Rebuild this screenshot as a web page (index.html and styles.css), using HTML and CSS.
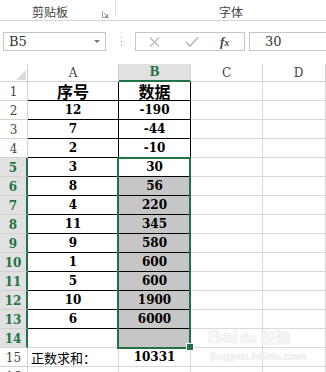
FILE: index.html
```html
<!DOCTYPE html>
<html lang="zh-CN">
<head>
    <meta charset="UTF-8">
    <title>正数求和</title>
    <link rel="stylesheet" href="styles.css">
</head>
<body>
<div id="ribbon">
    <div class="group clip">
        <span class="label">剪贴板</span>
        <svg class="launcher" width="7" height="7" viewBox="0 0 7 7">
            <path d="M0.5 0v6.5H7" fill="none" stroke="#9a9a9a"/>
            <path d="M2 2l3.5 3.5M3 5.5h2.5V3" fill="none" stroke="#9a9a9a"/>
        </svg>
    </div>
    <div class="group font">
        <span class="label">字体</span>
    </div>
</div>

<div id="fbar">
    <div class="namebox">
        <span>B5</span>
        <i class="arrow"></i>
    </div>
    <div class="grip"><i></i><i></i><i></i></div>
    <div class="tools">
        <svg class="cancel" width="11" height="10" viewBox="0 0 11 10">
            <path d="M1 0.5l9 9M10 0.5l-9 9" stroke="#b9b9b9" stroke-width="1.3"/>
        </svg>
        <svg class="enter" width="14" height="10" viewBox="0 0 14 10">
            <path d="M1 5l4 4 8-8.5" fill="none" stroke="#b9b9b9" stroke-width="1.6"/>
        </svg>
        <span class="fx">f<small>x</small></span>
    </div>
    <div class="input">30</div>
</div>

<div id="wrap">
<div id="sheet">
    <div class="c ch corner"><i></i></div><div class="c ch">A</div><div class="c ch on">B</div><div class="c ch">C</div><div class="c ch cut">D</div>

    <div class="c rh">1</div><div class="c k cn">序号</div><div class="c k cn">数据</div><div class="c"></div><div class="c"></div>
    <div class="c rh">2</div><div class="c k">12</div><div class="c k">-190</div><div class="c"></div><div class="c"></div>
    <div class="c rh">3</div><div class="c k">7</div><div class="c k">-44</div><div class="c"></div><div class="c"></div>
    <div class="c rh">4</div><div class="c k">2</div><div class="c k">-10</div><div class="c"></div><div class="c"></div>
    <div class="c rh on">5</div><div class="c k">3</div><div class="c k">30</div><div class="c"></div><div class="c"></div>
    <div class="c rh on">6</div><div class="c k">8</div><div class="c k g">56</div><div class="c"></div><div class="c"></div>
    <div class="c rh on">7</div><div class="c k">4</div><div class="c k g">220</div><div class="c"></div><div class="c"></div>
    <div class="c rh on">8</div><div class="c k">11</div><div class="c k g">345</div><div class="c"></div><div class="c"></div>
    <div class="c rh on">9</div><div class="c k">9</div><div class="c k g">580</div><div class="c"></div><div class="c"></div>
    <div class="c rh on">10</div><div class="c k">1</div><div class="c k g">600</div><div class="c"></div><div class="c"></div>
    <div class="c rh on">11</div><div class="c k">5</div><div class="c k g">600</div><div class="c"></div><div class="c"></div>
    <div class="c rh on">12</div><div class="c k">10</div><div class="c k g">1900</div><div class="c"></div><div class="c"></div>
    <div class="c rh on">13</div><div class="c k">6</div><div class="c k g">6000</div><div class="c"></div><div class="c"></div>
    <div class="c rh on">14</div><div class="c"></div><div class="c g"></div><div class="c"></div><div class="c"></div>
    <div class="c rh">15</div><div class="c sum">正数求和：</div><div class="c">10331</div><div class="c"></div><div class="c"></div>
    <div class="c rh">16</div><div class="c"></div><div class="c"></div><div class="c"></div><div class="c"></div>

    <!-- 选区 -->
    <div class="sel"></div>
    <div class="handle"></div>

    <!-- 水印 -->
    <div class="mark">
        <div class="logo">Bai<span class="du">du</span><span class="jy">经验</span></div>
        <div class="url">jingyan.baidu.com</div>
    </div>
</div>
</div>
</body>
</html>
```

FILE: styles.css
```css
* {
    margin: 0;
    padding: 0;
    box-sizing: border-box;
}

body {
    width: 326px;
    height: 372px;
    overflow: hidden;
    background: #fff;
    color: #000;
    font-family: "DejaVu Serif", serif;
}

/* 功能区 */
#ribbon {
    display: flex;
    align-items: flex-start;
    height: 21px;
    overflow: hidden;
    border-bottom: 1px solid #d5d5d5;
    font-family: "Noto Sans CJK SC", sans-serif;
    font-size: 12px;
    color: #444;
}

.group {
    display: flex;
    align-items: flex-start;
    flex-shrink: 0;
    height: 17px;
    padding-top: 4px;
}

.group .label {
    flex-shrink: 0;
    white-space: nowrap;
    line-height: 16px;
}

.clip {
    width: 116px;
    border-right: 1px solid #e0e0e0;
    padding-left: 32px;
}

.launcher {
    flex-shrink: 0;
    margin: 7px 6px 0 auto;
}

.font {
    width: 210px;
    justify-content: center;
    padding-left: 20px;
}

/* 编辑栏 */
#fbar {
    display: flex;
    align-items: center;
    height: 19px;
    margin: 11px 0 13px;
    font-size: 13px;
    color: #333;
}

.namebox {
    display: flex;
    align-items: center;
    justify-content: space-between;
    width: 103px;
    height: 19px;
    margin-left: 3px;
    padding: 0 5px;
    border: 1px solid #c6c6c6;
}

.arrow {
    width: 0;
    height: 0;
    border-left: 3px solid transparent;
    border-right: 3px solid transparent;
    border-top: 3px solid #777;
}

.grip {
    display: flex;
    flex-direction: column;
    gap: 3px;
    margin-left: 15px;
}

.grip i {
    width: 1px;
    height: 1px;
    background: #9a9a9a;
}

.tools {
    display: flex;
    align-items: center;
    width: 110px;
    height: 19px;
    margin-left: 13px;
    padding-left: 13px;
    border: 1px solid #c6c6c6;
}

.enter {
    margin-left: 25px;
}

.fx {
    margin-left: 21px;
    font-family: "Liberation Serif", serif;
    font-style: italic;
    font-weight: bold;
    font-size: 13px;
    color: #444;
}

.fx small {
    font-size: 10px;
}

.input {
    flex: 1;
    height: 19px;
    margin-left: 4px;
    padding-left: 15px;
    border: 1px solid #c6c6c6;
    border-right: none;
    line-height: 17px;
}

/* 表格 */
#wrap {
    width: 326px;
    height: 308px;
    overflow: hidden;
}

#sheet {
    position: relative;
    display: grid;
    grid-template-columns: 28px 91px 72px 72px 63px;
    grid-template-rows: 18px;
    grid-auto-rows: 19px;
}

.c {
    display: flex;
    align-items: center;
    justify-content: center;
    border-right: 1px solid #d9d9d9;
    border-bottom: 1px solid #d9d9d9;
    font-size: 12px;
    font-weight: bold;
}

.ch {
    border-color: #d0d0d0;
    font-weight: normal;
    color: #444;
}

.ch.cut {
    padding-left: 9px;
}

.ch.on {
    background: #e1e1e1;
    border-bottom: 2px solid #217346;
    color: #217346;
    font-weight: bold;
}

.corner {
    justify-content: flex-end;
    align-items: flex-end;
    padding: 0 1px 1px 0;
}

.corner i {
    width: 0;
    height: 0;
    border-left: 10px solid transparent;
    border-bottom: 10px solid #dcdcdc;
}

.rh {
    border-color: #d0d0d0;
    font-weight: normal;
    color: #444;
    padding-top: 1px;
}

.rh.on {
    background: #e1e1e1;
    border-right: 2px solid #217346;
    color: #217346;
    font-weight: bold;
}

.k {
    border-color: #000;
}

.g {
    background: #c6c6c6;
}

.cn {
    font-family: "Noto Sans CJK SC", sans-serif;
    font-size: 16px;
}

.sum {
    justify-content: flex-start;
    padding-left: 3px;
    font-family: "Noto Sans CJK SC", sans-serif;
    font-size: 13px;
    font-weight: normal;
}

.sel {
    position: absolute;
    left: 117px;
    top: 93px;
    width: 74px;
    height: 192px;
    border: 2px solid #217346;
}

.handle {
    position: absolute;
    left: 186px;
    top: 279px;
    width: 8px;
    height: 8px;
    background: #217346;
    border: 1px solid #fff;
}

.mark {
    position: absolute;
    left: 208px;
    top: 262px;
    color: #f6f6f6;
    text-shadow: 0 0 1px #d0d0d0;
    font-family: "Liberation Sans", sans-serif;
    font-weight: bold;
}

.logo {
    font-size: 19px;
    line-height: 22px;
}

.du {
    font-size: 14px;
    margin-left: 2px;
}

.jy {
    font-family: "Noto Sans CJK SC", sans-serif;
    font-size: 15px;
    margin-left: 4px;
}

.url {
    font-size: 11px;
    line-height: 14px;
    margin-left: 2px;
}
```
